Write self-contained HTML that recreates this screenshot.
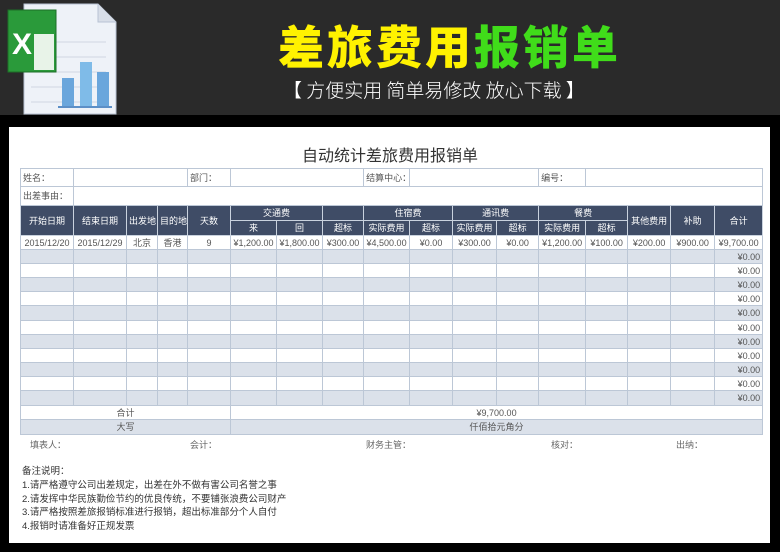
<!DOCTYPE html>
<html><head><meta charset="utf-8"><style>
*{margin:0;padding:0;box-sizing:border-box}
body{width:780px;height:552px;background:#000;position:relative;overflow:hidden;font-family:"Liberation Sans","Noto Sans CJK SC",sans-serif}
#top{position:absolute;left:0;top:0;width:780px;height:115px;background:#2a2a2a}
#paper{position:absolute;left:9px;top:127px;width:761px;height:416px;background:#fff}
.big{position:absolute;left:278px;top:16px;font-size:46px;font-weight:900;letter-spacing:3px;line-height:58px;font-family:"Noto Sans CJK SC",sans-serif;white-space:nowrap}
.sub{position:absolute;left:283px;top:76px;font-size:19px;color:#fff;line-height:28px;white-space:nowrap;font-family:"Noto Sans CJK SC",sans-serif;font-weight:300}
#title{position:absolute;left:0;width:780px;top:142px;text-align:center;font-size:16px;color:#333;font-family:"Noto Sans CJK SC",sans-serif}
table{position:absolute;left:20px;top:168px;width:742px;border-collapse:collapse;table-layout:fixed;font-size:9px;color:#555;font-family:"Liberation Sans","Noto Sans CJK SC",sans-serif}
td{border:1px solid #bcc7d6;text-align:center;padding:0 2px;white-space:nowrap;overflow:hidden;line-height:12px}
td.l{text-align:left}
td.r{text-align:right}
tr.h td{background:#3f4c66;color:#fff;border-color:#c9d2de}
tr.g td{background:#dbe1ea}
.sig{position:absolute;top:438px;font-size:9px;color:#666}
.notes{position:absolute;left:22px;top:465px;font-size:9.5px;color:#333;line-height:13.8px}
</style></head><body>
<div id="top">
<svg style="position:absolute;left:6px;top:2px" width="112" height="115" viewBox="0 0 112 115">
<path d="M18 2 H92 L110 20 V112 H18 Z" fill="#eef2f8" stroke="#b8c3d3"/>
<path d="M92 2 V20 H110" fill="#d8dee8" stroke="#b8c3d3"/>
<g stroke="#d0d7e2"><line x1="25" y1="40" x2="100" y2="40"/><line x1="25" y1="55" x2="100" y2="55"/><line x1="25" y1="70" x2="100" y2="70"/><line x1="25" y1="85" x2="100" y2="85"/><line x1="25" y1="100" x2="100" y2="100"/></g>
<rect x="56" y="76" width="12" height="28" fill="#6aa6dc"/><rect x="74" y="60" width="12" height="44" fill="#7fbbe8"/><rect x="91" y="70" width="12" height="34" fill="#6aa6dc"/>
<line x1="52" y1="105" x2="106" y2="105" stroke="#5c8fc7" stroke-width="2"/>
<rect x="2" y="8" width="48" height="62" fill="#2a9a3a" stroke="#1c6f27"/>
<path d="M28 32 h20 v36 h-20z" fill="#e8f3e8"/>
<text x="6" y="52" font-size="30" font-weight="bold" fill="#fff" font-family="Liberation Sans">X</text>
</svg>
<div class="big"><span style="color:#fff200">差旅费用</span><span style="color:#40dc1a">报销单</span></div>
<div class="sub">【 方便实用 简单易修改  放心下载 】</div>
</div>
<div id="paper"></div>
<div id="title">自动统计差旅费用报销单</div>
<table>
<colgroup><col style="width:53px"><col style="width:53px"><col style="width:31px"><col style="width:30px"><col style="width:43px"><col style="width:46px"><col style="width:46px"><col style="width:41px"><col style="width:46px"><col style="width:43px"><col style="width:44px"><col style="width:42px"><col style="width:47px"><col style="width:42px"><col style="width:43px"><col style="width:44px"><col style="width:48px"></colgroup>
<tr style="height:18px"><td class="l" colspan="1">姓名：</td><td colspan="3"></td><td class="l">部门：</td><td colspan="3"></td><td class="l">结算中心：</td><td colspan="3"></td><td class="l">编号：</td><td colspan="4"></td></tr>
<tr style="height:19px"><td class="l">出差事由：</td><td colspan="16"></td></tr>
<tr class="h" style="height:15px"><td rowspan="2">开始日期</td><td rowspan="2">结束日期</td><td rowspan="2">出发地</td><td rowspan="2">目的地</td><td rowspan="2">天数</td><td colspan="2">交通费</td><td></td><td colspan="2">住宿费</td><td colspan="2">通讯费</td><td colspan="2">餐费</td><td rowspan="2">其他费用</td><td rowspan="2">补助</td><td rowspan="2">合计</td></tr>
<tr class="h" style="height:15px"><td>来</td><td>回</td><td>超标</td><td>实际费用</td><td>超标</td><td>实际费用</td><td>超标</td><td>实际费用</td><td>超标</td></tr>
<tr style="height:14px"><td>2015/12/20</td><td>2015/12/29</td><td>北京</td><td>香港</td><td>9</td><td>¥1,200.00</td><td>¥1,800.00</td><td>¥300.00</td><td>¥4,500.00</td><td>¥0.00</td><td>¥300.00</td><td>¥0.00</td><td>¥1,200.00</td><td>¥100.00</td><td>¥200.00</td><td>¥900.00</td><td>¥9,700.00</td></tr>
<tr class="g" style="height:14px"><td></td><td></td><td></td><td></td><td></td><td></td><td></td><td></td><td></td><td></td><td></td><td></td><td></td><td></td><td></td><td></td><td class="r">¥0.00</td></tr>
<tr style="height:14px"><td></td><td></td><td></td><td></td><td></td><td></td><td></td><td></td><td></td><td></td><td></td><td></td><td></td><td></td><td></td><td></td><td class="r">¥0.00</td></tr>
<tr class="g" style="height:14px"><td></td><td></td><td></td><td></td><td></td><td></td><td></td><td></td><td></td><td></td><td></td><td></td><td></td><td></td><td></td><td></td><td class="r">¥0.00</td></tr>
<tr style="height:14px"><td></td><td></td><td></td><td></td><td></td><td></td><td></td><td></td><td></td><td></td><td></td><td></td><td></td><td></td><td></td><td></td><td class="r">¥0.00</td></tr>
<tr class="g" style="height:15px"><td></td><td></td><td></td><td></td><td></td><td></td><td></td><td></td><td></td><td></td><td></td><td></td><td></td><td></td><td></td><td></td><td class="r">¥0.00</td></tr>
<tr style="height:14px"><td></td><td></td><td></td><td></td><td></td><td></td><td></td><td></td><td></td><td></td><td></td><td></td><td></td><td></td><td></td><td></td><td class="r">¥0.00</td></tr>
<tr class="g" style="height:14px"><td></td><td></td><td></td><td></td><td></td><td></td><td></td><td></td><td></td><td></td><td></td><td></td><td></td><td></td><td></td><td></td><td class="r">¥0.00</td></tr>
<tr style="height:14px"><td></td><td></td><td></td><td></td><td></td><td></td><td></td><td></td><td></td><td></td><td></td><td></td><td></td><td></td><td></td><td></td><td class="r">¥0.00</td></tr>
<tr class="g" style="height:14px"><td></td><td></td><td></td><td></td><td></td><td></td><td></td><td></td><td></td><td></td><td></td><td></td><td></td><td></td><td></td><td></td><td class="r">¥0.00</td></tr>
<tr style="height:14px"><td></td><td></td><td></td><td></td><td></td><td></td><td></td><td></td><td></td><td></td><td></td><td></td><td></td><td></td><td></td><td></td><td class="r">¥0.00</td></tr>
<tr class="g" style="height:15px"><td></td><td></td><td></td><td></td><td></td><td></td><td></td><td></td><td></td><td></td><td></td><td></td><td></td><td></td><td></td><td></td><td class="r">¥0.00</td></tr>
<tr style="height:14px"><td colspan="5">合计</td><td colspan="12">¥9,700.00</td></tr>
<tr class="g" style="height:15px"><td colspan="5">大写</td><td colspan="12">仟佰拾元角分</td></tr>
</table>
<div class="sig" style="left:30px">填表人：</div>
<div class="sig" style="left:190px">会计：</div>
<div class="sig" style="left:366px">财务主管：</div>
<div class="sig" style="left:551px">核对：</div>
<div class="sig" style="left:676px">出纳：</div>
<div class="notes">备注说明：<br>1.请严格遵守公司出差规定，出差在外不做有害公司名誉之事<br>2.请发挥中华民族勤俭节约的优良传统，不要铺张浪费公司财产<br>3.请严格按照差旅报销标准进行报销，超出标准部分个人自付<br>4.报销时请准备好正规发票</div>
</body></html>
